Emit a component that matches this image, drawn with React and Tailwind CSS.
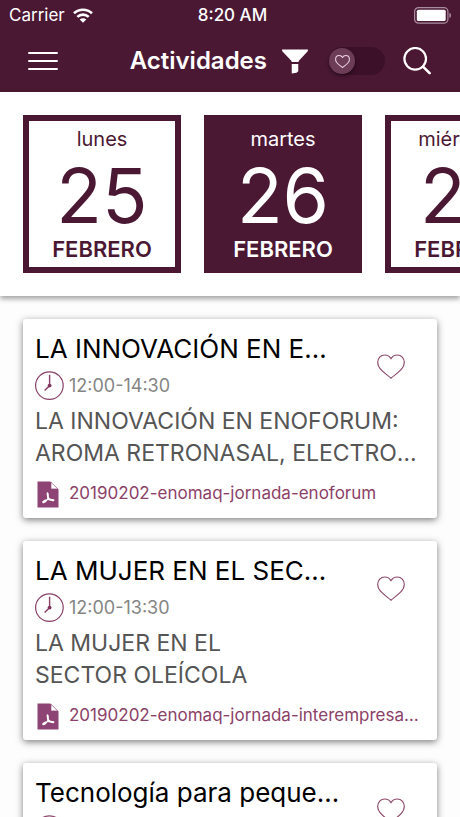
import { useState } from "react";

const DAYS = [
  { id: "25", weekday: "lunes", day: "25", month: "FEBRERO" },
  { id: "26", weekday: "martes", day: "26", month: "FEBRERO" },
  { id: "27", weekday: "miércoles", day: "27", month: "FEBRERO" },
];

const ACTIVITIES = [
  {
    id: 1,
    title: "LA INNOVACIÓN EN ENOFORUM",
    time: "12:00-14:30",
    description: ["LA INNOVACIÓN EN ENOFORUM:", "AROMA RETRONASAL, ELECTROQUÍMICA"],
    file: "20190202-enomaq-jornada-enoforum",
  },
  {
    id: 2,
    title: "LA MUJER EN EL SECTOR OLEÍCOLA",
    time: "12:00-13:30",
    description: ["LA MUJER EN EL", "SECTOR OLEÍCOLA"],
    file: "20190202-enomaq-jornada-interempresas-oleicola",
  },
  {
    id: 3,
    title: "Tecnología para pequeñas bodegas",
    time: "16:00-17:30",
    description: ["Tecnología para", "pequeñas bodegas"],
    file: "20190202-enomaq-jornada-tecnologia",
  },
];

const HeartIcon = ({ className, strokeWidth, fill = "none" }) => (
  <svg viewBox="0 0 28 25" fill={fill} stroke="currentColor" strokeWidth={strokeWidth} strokeLinejoin="round" className={className} aria-hidden="true">
    <path d="M14 24.2C10.5 21.2 6.2 18.4 3.3 14.9C1.6 12.9 0.7 10.8 0.7 8.5C0.7 4.2 3.7 1 7.7 1C10.4 1 12.7 2.4 14 4.8C15.3 2.4 17.6 1 20.3 1C24.3 1 27.3 4.2 27.3 8.5C27.3 10.8 26.4 12.9 24.7 14.9C21.8 18.4 17.5 21.2 14 24.2Z" />
  </svg>
);

const WifiIcon = () => (
  <svg viewBox="0 0 20 15" fill="none" stroke="currentColor" strokeWidth="2.6" className="h-[15px] w-5" aria-hidden="true">
    <path d="M1 5.3C6 0.5 14 0.5 19 5.3" />
    <path d="M4.3 8.9C7.5 5.9 12.5 5.9 15.7 8.9" />
    <path d="M10 14.8L6.7 11.5C8.6 9.8 11.4 9.8 13.3 11.5Z" fill="currentColor" stroke="none" />
  </svg>
);

const BatteryIcon = () => (
  <svg viewBox="0 0 38 17" fill="none" className="h-[17px] w-[38px]" aria-hidden="true">
    <rect x="0.6" y="0.6" width="33.3" height="15.6" rx="4" stroke="#a88d9c" strokeWidth="1.2" />
    <rect x="2.8" y="2.8" width="28.9" height="11.2" rx="1.5" fill="white" />
    <path d="M35.4 5.8C37.6 6.6 37.6 10.2 35.4 11Z" fill="#a88d9c" />
  </svg>
);

const FunnelIcon = () => (
  <svg viewBox="0 0 28 26" fill="currentColor" className="h-[25px] w-7" aria-hidden="true">
    <path d="M0.5 0.5H27.5C27.5 2 27 2.8 26 3.7L17.8 12.6V13.4H10.4V12.6L2 3.7C1 2.8 0.5 2 0.5 0.5Z" />
    <path d="M10.6 15.6H17.4V23.2L15.6 24.6L10.6 25.6Z" />
  </svg>
);

const SearchIcon = () => (
  <svg viewBox="0 0 28 28" fill="none" stroke="currentColor" strokeWidth="2.2" strokeLinecap="round" className="size-7" aria-hidden="true">
    <circle cx="12.2" cy="11.8" r="10.8" />
    <path d="M20 19.6L26.6 26.2" strokeWidth="2.6" />
  </svg>
);

const ClockIcon = () => (
  <svg viewBox="0 0 30 30" fill="none" stroke="#8b4168" className="size-[30px] shrink-0" aria-hidden="true">
    <circle cx="14.4" cy="14.6" r="13.8" strokeWidth="1.2" />
    <path d="M14.6 3.8V14.6L9.6 19.6" strokeWidth="1.4" />
    <circle cx="14.6" cy="14.6" r="1.9" fill="#7f345c" stroke="none" />
  </svg>
);

const PdfIcon = () => (
  <svg viewBox="0 0 22 27" className="h-[27px] w-[22px] shrink-0" aria-hidden="true">
    <path d="M0.5 0.5H13.5L21.5 8.5V26.5H0.5Z" fill="#8d4475" />
    <path d="M13 0.5L21.5 0.5V8.5Z" fill="white" />
    <path d="M14 1.2V7.9H20.8Z" fill="white" stroke="#8d4475" strokeWidth="0.6" />
    <g fill="none" stroke="white" strokeWidth="1.4" strokeLinecap="round" strokeLinejoin="round">
      <path d="M10.4 12.2C9.9 13.6 11 15.6 11.2 17C10.4 18.6 9 20.2 7.6 21.2C6.6 21.8 5.6 21.6 6 20.7C6.9 19.4 9.2 18.8 11.2 18.2" />
      <path d="M10.4 12.2C11.6 12.4 11 15 11 16.4C12 18 13.6 18.8 15.6 18.6C16.9 18.5 17.2 19.6 16 19.6C14.4 19.6 12.8 18.6 11.2 18.2" />
    </g>
  </svg>
);

const StatusBar = () => (
  <div className="grid h-[30px] grid-cols-3 items-center pr-2 pl-[9px] text-[17px]">
    <div className="flex items-center gap-2">
      <span className="pt-0.5">Carrier</span>
      <WifiIcon />
    </div>
    <span className="pt-0.5 pl-1 text-center font-medium whitespace-nowrap">8:20 AM</span>
    <div className="flex justify-end">
      <BatteryIcon />
    </div>
  </div>
);

const FavouriteSwitch = ({ checked, onChange }) => (
  <label className="relative block h-7 w-14 cursor-pointer rounded-full bg-[#3d1029]">
    <input
      type="checkbox"
      checked={checked}
      onChange={(e) => onChange(e.target.checked)}
      aria-label="Solo favoritos"
      className="peer absolute inset-0 size-full cursor-pointer appearance-none rounded-full"
    />
    <span className="pointer-events-none absolute top-px left-0 flex size-[26px] items-center justify-center rounded-full bg-[#6d3d58] text-[#ecd3e0] shadow-[0_2px_4px_rgba(0,0,0,0.45)] peer-checked:left-[30px]">
      <HeartIcon className="h-[13px] w-[15px]" strokeWidth="2" />
    </span>
  </label>
);

const NavBar = ({ onlyFavourites, onToggle }) => (
  <div className="flex h-[62px] items-center justify-between pr-[29px] pl-7">
    <button type="button" aria-label="Menú" className="flex w-[30px] flex-col gap-1.5">
      <span className="h-0.5 rounded-full bg-white" />
      <span className="h-0.5 rounded-full bg-white" />
      <span className="h-0.5 rounded-full bg-white" />
    </button>
    <div className="flex items-center">
      <h1 className="mr-3.5 text-2xl font-semibold">Actividades</h1>
      <button type="button" aria-label="Filtrar" className="mr-5">
        <FunnelIcon />
      </button>
      <FavouriteSwitch checked={onlyFavourites} onChange={onToggle} />
      <button type="button" aria-label="Buscar" className="ml-[18px]">
        <SearchIcon />
      </button>
    </div>
  </div>
);

const DayButton = ({ item, active, onClick }) => (
  <button
    type="button"
    onClick={onClick}
    aria-pressed={active}
    className={`flex size-[158px] shrink-0 flex-col items-center border-6 border-[#4b1834] pt-1 ${
      active ? "bg-[#4b1834] text-white" : "bg-white text-[#4b1834]"
    }`}
  >
    <span className="text-xl leading-7">{item.weekday}</span>
    <span className="text-[75px] leading-[86px]">{item.day}</span>
    <span className="text-[22px] leading-5 font-semibold">{item.month}</span>
  </button>
);

const ActivityCard = ({ activity, favourite, onFavourite }) => (
  <article className="rounded-[3px] bg-white px-3 pt-3 pb-2.5 shadow-[0_2px_7px_rgba(0,0,0,0.5)]">
    <div className="flex items-center justify-between">
      <div className="w-[305px] min-w-0">
        <h2 className="truncate text-[26px] leading-9 text-black">{activity.title}</h2>
        <div className="mt-1 flex items-center gap-1 text-lg leading-[30px] text-[#858585]">
          <ClockIcon />
          <time>{activity.time}</time>
        </div>
      </div>
      <button type="button" onClick={onFavourite} aria-label="Favorito" aria-pressed={favourite} className="mr-5 text-[#8d4a6b]">
        <HeartIcon className="h-[25px] w-7" strokeWidth="1.2" fill={favourite ? "currentColor" : "none"} />
      </button>
    </div>
    <p className="mt-1 text-[23px] leading-8 text-[#555555]">
      {activity.description.map((line) => (
        <span key={line} className="block truncate">
          {line}
        </span>
      ))}
    </p>
    <a href="#" className="mt-[11px] flex h-7 items-center gap-2.5 pl-0.5 text-[17px] text-[#8b4168]">
      <PdfIcon />
      <span className="truncate">{activity.file}</span>
    </a>
  </article>
);

export default function App() {
  const [selectedDay, setSelectedDay] = useState("26");
  const [onlyFavourites, setOnlyFavourites] = useState(false);
  const [favourites, setFavourites] = useState([]);

  const toggleFavourite = (id) =>
    setFavourites((prev) => (prev.includes(id) ? prev.filter((f) => f !== id) : [...prev, id]));

  const visible = onlyFavourites ? ACTIVITIES.filter((a) => favourites.includes(a.id)) : ACTIVITIES;

  return (
    <div className="flex h-screen flex-col bg-[#fdfdfd] font-['Inter',sans-serif]">
      <header className="bg-[#4b1834] text-white">
        <StatusBar />
        <NavBar onlyFavourites={onlyFavourites} onToggle={setOnlyFavourites} />
      </header>
      <nav className="z-10 flex shrink-0 gap-[23px] overflow-x-auto bg-white p-[23px] shadow-[0_3px_5px_rgba(0,0,0,0.35)] [scrollbar-width:none]">
        {DAYS.map((item) => (
          <DayButton key={item.id} item={item} active={item.id === selectedDay} onClick={() => setSelectedDay(item.id)} />
        ))}
      </nav>
      <main className="flex min-h-0 flex-1 flex-col gap-[23px] overflow-y-auto p-[23px] [scrollbar-width:none]">
        {visible.map((activity) => (
          <ActivityCard
            key={activity.id}
            activity={activity}
            favourite={favourites.includes(activity.id)}
            onFavourite={() => toggleFavourite(activity.id)}
          />
        ))}
      </main>
    </div>
  );
}
